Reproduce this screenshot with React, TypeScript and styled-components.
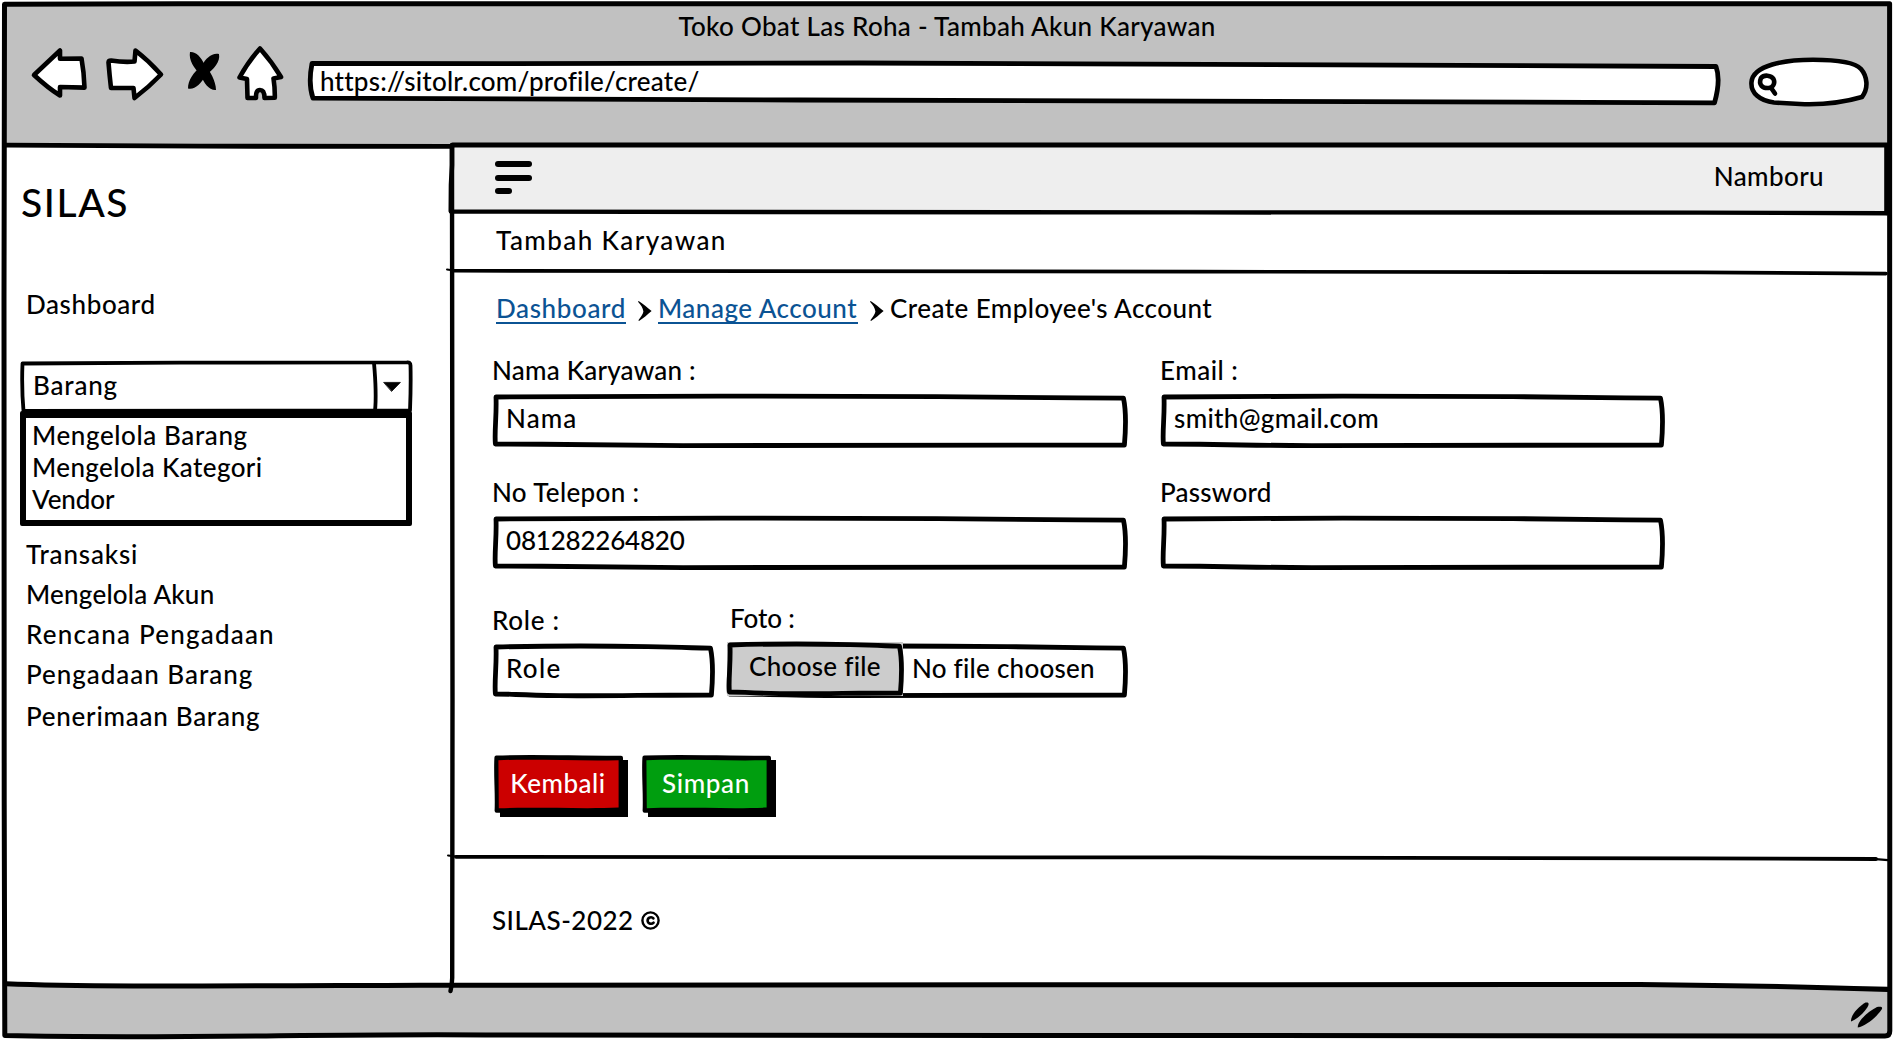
import React from "react";
import styled, { createGlobalStyle, css } from "styled-components";

const INK = "#000000";
const CHROME = "#c1c1c1";
const LINK = "#0b5394";

const GlobalStyle = createGlobalStyle`
  *, *::before, *::after { box-sizing: border-box; }
  html, body { margin: 0; padding: 0; background: #ffffff; }
  body { overflow: hidden; }
`;

/* ---------- text ---------- */

const type = css<{ $track?: number }>`
  font-family: Lato, "Open Sans", sans-serif;
  font-size: 26px;
  font-weight: 500;
  line-height: 32px;
  letter-spacing: ${(p) => p.$track ?? 0.5}px;
  white-space: nowrap;
`;

const Copy = styled.span<{ $track?: number; $nudge?: number }>`
  ${type}
  display: block;
  margin-left: ${(p) => p.$nudge ?? 0}px;
`;

/* ---------- window ---------- */

const Window = styled.div`
  position: relative;
  width: 1894px;
  height: 1040px;
  display: flex;
  flex-direction: column;
  color: ${INK};
  background: #ffffff;
  overflow: hidden;
`;

const Linework = styled.svg`
  position: absolute;
  left: 0;
  top: 0;
  width: 100%;
  height: 100%;
  overflow: visible;
  pointer-events: none;
  fill: none;
  stroke: ${INK};
  stroke-linecap: round;
  stroke-linejoin: round;
`;

const Chrome = styled.header`
  flex: 0 0 142px;
  display: flex;
  flex-direction: column;
  margin: 3px 4px 0;
  padding-top: 7px;
  background: ${CHROME};
`;

const WindowTitle = styled.h1`
  ${type}
  margin: 0;
  text-align: center;
`;

const Toolbar = styled.div`
  display: flex;
  align-items: flex-start;
  padding: 4px 20px 0 26px;
`;

const NavIcon = styled.svg<{ $after: number }>`
  display: block;
  flex: none;
  height: 56px;
  margin-right: ${(p) => p.$after}px;
  fill: #ffffff;
  stroke: ${INK};
  stroke-width: 4.6;
  stroke-linejoin: round;
  stroke-linecap: round;
`;

const AddressBar = styled.div`
  position: relative;
  width: 1412px;
  height: 56px;
  padding: 19px 0 0 12px;
`;

const AddressText = styled(Copy)`
  position: relative;
`;

const SearchBox = styled.svg`
  display: block;
  flex: none;
  width: 124px;
  height: 56px;
  margin: 10px 0 0 28px;
  fill: #ffffff;
  stroke: ${INK};
  stroke-width: 4.6;
  stroke-linecap: round;
  stroke-linejoin: round;
`;

const Body = styled.div`
  flex: 0 0 841px;
  display: flex;
`;

const StatusBar = styled.footer`
  flex: 0 0 49px;
  display: flex;
  justify-content: flex-end;
  align-items: center;
  margin: 0 4px;
  padding-right: 6px;
  background: ${CHROME};
`;

const Grip = styled.svg`
  width: 36px;
  height: 30px;
  margin-top: 9px;
`;

/* ---------- sidebar ---------- */

const Sidebar = styled.aside`
  flex: 0 0 452px;
  padding: 33px 0 0 20px;
`;

const Brand = styled.div`
  ${type}
  font-size: 39px;
  line-height: 48px;
  height: 48px;
  padding-left: 1px;
`;

const SideItem = styled.div<{ $track: number; $gap: number }>`
  ${type}
  margin-top: ${(p) => p.$gap}px;
  margin-left: 6px;
`;

const Select = styled.div`
  position: relative;
  width: 392px;
  height: 50px;
  margin-top: 41px;
  padding: 8px 0 0 13px;
`;

const OptionList = styled.ul`
  width: 392px;
  height: 115px;
  margin: 0;
  padding: 1px 0 0 6px;
  list-style: none;
  border: solid ${INK};
  border-width: 7px 6px 6px;
  border-radius: 2px;
`;

const Option = styled.li<{ $track: number }>`
  ${type}
`;

const Menu = styled.nav`
  padding-top: 4px;
`;

/* ---------- main pane ---------- */

const Main = styled.main`
  position: relative;
  flex: 1;
  display: flex;
  flex-direction: column;
`;

const TopBar = styled.div`
  flex: 0 0 67px;
  display: flex;
  align-items: flex-start;
  justify-content: space-between;
  margin-right: 8px;
  padding: 15px 62px 0 43px;
  background: #eeeeee;
`;

const Burger = styled.button`
  display: flex;
  flex-direction: column;
  gap: 7.7px;
  padding: 1px 0 0;
  border: 0;
  background: none;
`;

const Bar = styled.span<{ $w: number }>`
  width: ${(p) => p.$w}px;
  height: 6px;
  border-radius: 3px;
  background: ${INK};
`;

const TitleRow = styled.div`
  flex: 0 0 60px;
  padding: 12px 0 0 44px;
`;

const Content = styled.section`
  flex: 0 0 585px;
  padding: 20px 0 0 41px;
`;

const Crumbs = styled.nav`
  display: flex;
  padding-left: 3px;
`;

const CrumbLink = styled.a<{ $track: number; $w: number }>`
  ${type}
  width: ${(p) => p.$w}px;
  height: 32px;
  color: ${LINK};
  text-decoration: none;
  border-bottom: 2px solid ${LINK};
`;

const Chevron = styled.svg`
  width: 14px;
  height: 20px;
  margin: 9px 6px 0 12px;
`;

const FormGrid = styled.div`
  display: grid;
  grid-template-columns: 634px 503px;
  column-gap: 34px;
  row-gap: 28px;
  margin-top: 30px;
`;

const Field = styled.label<{ $w?: number }>`
  display: flex;
  flex-direction: column;
  gap: 8px;
  width: ${(p) => (p.$w ? `${p.$w}px` : "auto")};
`;

const FileField = styled.div`
  display: flex;
  flex-direction: column;
  gap: 10px;
  width: 400px;
  margin-top: -2px;
`;

const Box = styled.div`
  position: relative;
  height: 54px;
  padding: 8px 0 0 13px;
`;

const Value = styled(Copy)`
  position: relative;
`;

const LastRow = styled.div`
  display: flex;
  gap: 13px;
  margin-top: 34px;
`;

const FileBox = styled.div`
  position: relative;
  display: flex;
  gap: 9px;
  height: 54px;
  padding-top: 8px;
`;

const ChooseFile = styled.div`
  position: relative;
  width: 176px;
  height: 54px;
  margin-top: -10px;
  padding-top: 8px;
  text-align: center;
  background: #cccccc;
`;

const Actions = styled.div`
  display: flex;
  gap: 14px;
  margin: 57px 0 0 1px;
`;

const ActionButton = styled.button<{ $track: number }>`
  ${type}
  position: relative;
  width: 134px;
  height: 62px;
  padding: 12px 6px 18px 0;
  border: 0;
  color: #ffffff;
  background: none;
  text-align: center;
`;

const ButtonLabel = styled.span`
  position: relative;
`;

const Footer = styled.div`
  display: flex;
  align-items: flex-start;
  padding: 47px 0 0 40px;
`;

const CopyrightMark = styled.svg`
  width: 19px;
  height: 19px;
  margin: 7px 0 0 7px;
  fill: none;
  stroke: ${INK};
  stroke-linecap: round;
`;

/* ---------- hand-drawn outlines ---------- */

function SketchBox({ w, h, fill = "#ffffff" }: { w: number; h: number; fill?: string }) {
  const d = `M3 3 C${w * 0.2} 2 ${w * 0.5} 1.8 ${w * 0.7} 2.6 S${w * 0.9} 4 ${w - 3.5} 4.2
    C${w - 1} ${h * 0.3} ${w - 1} ${h * 0.6} ${w - 2.6} ${h - 3}
    C${w * 0.7} ${h - 3} ${w * 0.5} ${h - 1.8} ${w * 0.3} ${h - 2.4} S${w * 0.1} ${h - 4} 2.4 ${h - 4}
    C1.2 ${h * 0.7} 3.8 ${h * 0.4} 3 3 Z`;
  return (
    <Linework viewBox={`0 0 ${w} ${h}`}>
      <path d={d} fill={fill} strokeWidth={4.8} />
    </Linework>
  );
}

function ButtonShape({ fill }: { fill: string }) {
  return (
    <Linework viewBox="0 0 134 62">
      <path d="M6 5 H134 V62 H6 Z" fill={INK} stroke="none" />
      <path d="M2.4 2.6 C40 1 80 3 127 2.8 L127 55.4 L2.6 55.8 C3.4 38 1.4 20 2.4 2.6 Z" fill={INK} strokeWidth={4} />
      <path d="M4.4 5.2 C40 3.8 80 6 124.6 5.2 L124.6 52.6 C90 54.2 40 51.8 4.8 53.2 Z" fill={fill} stroke="none" />
    </Linework>
  );
}

interface TextFieldProps {
  label: string;
  labelTrack: number;
  value?: string;
  valueTrack?: number;
  width: number;
  fixed?: boolean;
}

function TextField({ label, labelTrack, value, valueTrack, width, fixed }: TextFieldProps) {
  return (
    <Field $w={fixed ? width : undefined}>
      <Copy $track={labelTrack} $nudge={-1}>{label}</Copy>
      <Box>
        <SketchBox w={width} h={54} />
        {value && <Value $track={valueTrack}>{value}</Value>}
      </Box>
    </Field>
  );
}

function CrumbMark() {
  return (
    <Chevron viewBox="0 0 14 20">
      <path d="M0.6 0 C5 3 9.5 6.5 13.6 10 C9 14 5.5 17 1 20 L0.4 19.2 C3 16 5 13 5.4 10.6 C5 7 3 4 0 0.8 Z" fill={INK} />
    </Chevron>
  );
}

const menu = [
  { label: "Transaksi", track: 0.82, gap: 8 },
  { label: "Mengelola Akun", track: 0.22, gap: 8 },
  { label: "Rencana Pengadaan", track: 1.2, gap: 8 },
  { label: "Pengadaan Barang", track: 0.97, gap: 8 },
  { label: "Penerimaan Barang", track: 0.74, gap: 10 },
];

const options = [
  { label: "Mengelola Barang", track: 0.6 },
  { label: "Mengelola Kategori", track: 0.4 },
  { label: "Vendor", track: -0.1 },
];

export default function App() {
  return (
    <>
      <GlobalStyle />
      <Window>
        <Chrome>
          <WindowTitle $track={0.31}>Toko Obat Las Roha - Tambah Akun Karyawan</WindowTitle>
          <Toolbar>
            <NavIcon viewBox="30 46 60 56" width={60} $after={14}>
              <path d="M34 75 L60 50.5 L60 58.8 L81.5 58.5 Q84 72 84.5 87.6 L60 87 L60 95.5 Q48 88 34 75 Z" />
            </NavIcon>
            <NavIcon viewBox="104 46 62 56" width={62} $after={20}>
              <path d="M108.5 62.5 Q108.5 60.5 111 60.5 Q124 62.5 134.5 61.5 L135.5 50.5 Q149 61 161 74.5 Q149 87 134.5 98 L133.5 88 L111 88 Q109.5 75 108.5 62.5 Z" />
            </NavIcon>
            <NavIcon viewBox="186 46 36 56" width={36} $after={14}>
              <g fill={INK} stroke="none">
                <path d="M190 52 C196 51.5 201 57 204.5 64.5 C210 71 216 81 216 90 C209 90.5 204 83 200.5 75 C194 68 188.5 60 190 52 Z" />
                <path d="M219 54 C212 52.5 206 58 202 65.5 C193 73 188 80 188 88.5 C194 90.5 201 84 205.5 75.5 C214 69 220.5 62 219 54 Z" />
              </g>
            </NavIcon>
            <NavIcon viewBox="236 46 50 56" width={50} $after={20}>
              <path d="M260 48.5 Q272 62 281 77 L273.5 78.5 Q275 88 274.8 97.8 L264.5 98 Q264.5 90 260 90 Q255.5 90 256 98 L247.5 98 L247 79 L239.5 77.5 Q248 62 260 48.5 Z" />
            </NavIcon>
            <AddressBar>
              <Linework viewBox="306 46 1412 56">
                <path
                  d="M312 63.5 L500 63.6 C900 62.5 1200 62.6 1716 66.5 Q1721 80 1714.5 102.8 C1400 104 1100 101 800 100 L313 98.2 Q308 84 312 63.5 Z"
                  fill="#ffffff"
                  strokeWidth={4.8}
                />
              </Linework>
              <AddressText $track={0.22} $nudge={2}>https://sitolr.com/profile/create/</AddressText>
            </AddressBar>
            <SearchBox viewBox="1746 56 124 56">
              <path d="M1774 102.5 C1760 101 1750.5 93 1751.5 82 C1753 65 1785 59.7 1813 59.7 C1836 59.7 1855 62 1861 69 C1867 76 1869 88 1862 97 C1845 102 1825 105 1800 104 L1774 102.5 Z" />
              <path d="M1761 78 C1764 74.5 1771 75 1773.5 79 C1775.5 83 1773 88 1768.5 88 C1763 88.5 1758 85 1761 78 Z" />
              <path d="M1771.5 88.5 L1775 93.5" fill="none" />
            </SearchBox>
          </Toolbar>
        </Chrome>

        <Body>
          <Sidebar>
            <Brand $track={1.6}>SILAS</Brand>
            <SideItem $track={0.6} $gap={62}>Dashboard</SideItem>
            <Select>
              <Linework viewBox="20 361 392 50">
                <path d="M22.5 363.5 L180 362.6 L407 362.4 Q410.5 362 410.5 365.5 Q411 385 410 410.5 L23.5 411 Q21.5 388 22.5 363.5 Z" fill="#ffffff" strokeWidth={3.8} />
                <path d="M374 363 C375.5 380 376.5 396 375 411" strokeWidth={3.8} />
                <path d="M384 382.4 H400.4 L391.8 391.2 Z" fill={INK} strokeWidth={0.8} />
              </Linework>
              <Value $track={0.8}>Barang</Value>
            </Select>
            <OptionList>
              {options.map((o) => (
                <Option key={o.label} $track={o.track}>{o.label}</Option>
              ))}
            </OptionList>
            <Menu>
              {menu.map((m) => (
                <SideItem key={m.label} $track={m.track} $gap={m.gap}>{m.label}</SideItem>
              ))}
            </Menu>
          </Sidebar>

          <Main>
            <TopBar>
              <Burger aria-label="Menu">
                <Bar $w={37} />
                <Bar $w={37} />
                <Bar $w={17} />
              </Burger>
              <Copy $track={0.4}>Namboru</Copy>
            </TopBar>
            <TitleRow>
              <Copy $track={1.42}>Tambah Karyawan</Copy>
            </TitleRow>

            <Content>
              <Crumbs>
                <CrumbLink $track={0.62} $w={130}>Dashboard</CrumbLink>
                <CrumbMark />
                <CrumbLink $track={0.5} $w={200}>Manage Account</CrumbLink>
                <CrumbMark />
                <Copy $track={0.44}>Create Employee's Account</Copy>
              </Crumbs>

              <FormGrid>
                <TextField label="Nama Karyawan :" labelTrack={0.22} value="Nama" valueTrack={1.1} width={634} />
                <TextField label="Email :" labelTrack={0.5} value="smith@gmail.com" valueTrack={0.33} width={503} />
                <TextField label="No Telepon :" labelTrack={0.36} value="081282264820" valueTrack={-0.2} width={634} />
                <TextField label="Password" labelTrack={0.24} width={503} />
              </FormGrid>

              <LastRow>
                <TextField label="Role :" labelTrack={0.7} value="Role" valueTrack={1.3} width={221} fixed />
                <FileField>
                  <Copy $track={-0.1} $nudge={3}>Foto :</Copy>
                  <FileBox>
                    <SketchBox w={400} h={54} />
                    <ChooseFile>
                      <SketchBox w={176} h={54} fill="#cccccc" />
                      <Value $track={0.3}>Choose file</Value>
                    </ChooseFile>
                    <Value $track={0.25}>No file choosen</Value>
                  </FileBox>
                </FileField>
              </LastRow>

              <Actions>
                <ActionButton $track={0.5}>
                  <ButtonShape fill="#cc0000" />
                  <ButtonLabel>Kembali</ButtonLabel>
                </ActionButton>
                <ActionButton $track={0.65}>
                  <ButtonShape fill="#009e0f" />
                  <ButtonLabel>Simpan</ButtonLabel>
                </ActionButton>
              </Actions>
            </Content>

            <Footer>
              <Copy $track={0.48}>SILAS-2022</Copy>
              <CopyrightMark viewBox="0 0 19 19">
                <circle cx="9.5" cy="9.5" r="8.1" strokeWidth="2.4" />
                <path d="M12.4 7.4 C11 5.6 6.6 5.8 6.6 9.6 C6.6 13.2 11 13.4 12.6 11.6" strokeWidth="2.6" />
              </CopyrightMark>
            </Footer>

            <Linework viewBox="452 145 1442 841">
              <path d="M452 147 C453 300 452 500 452.5 700 L452.2 978 Q452 985 450.5 991" strokeWidth={4.4} />
              <path d="M452 145 Q452.5 165 451 185 L450.8 211" strokeWidth={4.6} />
              <path d="M453 145 L1887 145" strokeWidth={5} />
              <path d="M451 211.6 C800 213 1300 212 1700 212.6 L1887 213.2" strokeWidth={4.4} />
              <path d="M1886.5 147 V213" strokeWidth={4.6} />
              <path d="M447 269.4 L454 270.6" strokeWidth={2} />
              <path d="M454 270.8 C800 271.8 1300 271.2 1700 272.4 L1886 273.6" strokeWidth={3.6} />
              <path d="M448 855.4 L456 856.6" strokeWidth={2} />
              <path d="M456 856.8 C800 857.6 1300 857 1700 858.4 L1876 859" strokeWidth={3.8} />
              <path d="M1876 859.2 L1888 860.2" strokeWidth={2.2} />
            </Linework>
          </Main>
        </Body>

        <StatusBar>
          <Grip viewBox="1848 1000 36 30">
            <path d="M1851 1021.4 C1850.4 1015 1859 1006.5 1865.5 1002.6 C1869 1001.8 1869.4 1004 1867.6 1007 C1863 1014 1856.5 1019.5 1851 1021.4 Z" fill={INK} />
            <path d="M1857.8 1027.6 C1857 1021.5 1868 1011.5 1877 1007 C1881 1006.2 1883.2 1007 1881.6 1009.6 C1876 1018 1866 1025.5 1857.8 1027.6 Z" fill={INK} />
          </Grip>
        </StatusBar>

        <Linework viewBox="0 0 1894 1040">
          <path
            d="M4.5 4.2 L180 3.8 L1889.6 3.8 L1889.8 1031 Q1889.8 1036 1885 1036 L1500 1035.8 C1100 1035.8 800 1035.6 500 1035 C330 1033 180 1039.5 4.8 1035.6 L4.2 800 L4 300 Z"
            strokeWidth={5}
          />
          <path d="M6 145.2 L200 146.2 L452 146.4" strokeWidth={4.8} />
          <path d="M6 983.8 C80 987 200 986 420 985.2 L1640 984.4 Q1790 986 1888 989.6" strokeWidth={5} />
        </Linework>
      </Window>
    </>
  );
}
